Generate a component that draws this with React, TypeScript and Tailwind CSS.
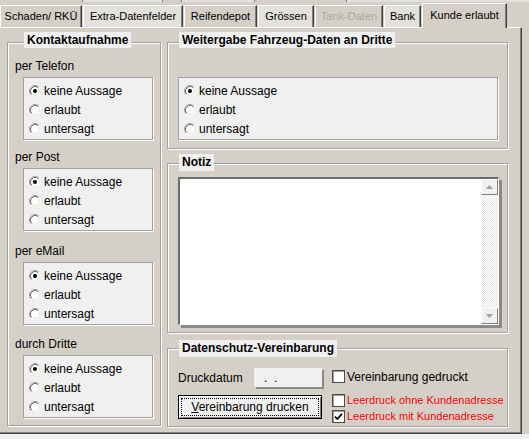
const FONT = "font-['Liberation_Sans',Arial,sans-serif]";

function RadioIcon({ checked }: { checked?: boolean }) {
  return (
    <svg width="12" height="12" viewBox="0 0 12 12" className="shrink-0">
      <circle cx="6" cy="6" r="5.5" fill="#fff" />
      <path d="M2.11 9.89A5.5 5.5 0 0 1 9.89 2.11" stroke="#a0a0a0" fill="none" />
      <path d="M2.82 9.18A4.5 4.5 0 0 1 9.18 2.82" stroke="#6a6a6a" fill="none" />
      <path d="M9.18 2.82A4.5 4.5 0 0 1 2.82 9.18" stroke="#e4e2dd" fill="none" />
      {checked && <circle cx="6" cy="6" r="2" fill="#000" />}
    </svg>
  );
}

function CheckBox({ checked }: { checked?: boolean }) {
  return (
    <div className="w-[13px] h-[13px] shrink-0 bg-white border border-[#4a4a4a] shadow-[inset_1px_1px_0_#a0a0a0] flex items-center justify-center">
      {checked && (
        <svg width="9" height="9" viewBox="0 0 9 9">
          <path d="M1 4.5 L3.3 7 L8 1.8" stroke="#000" strokeWidth="1.8" fill="none" />
        </svg>
      )}
    </div>
  );
}

function RadioBox({ className }: { className: string }) {
  const opts = ['keine Aussage', 'erlaubt', 'untersagt'];
  return (
    <div
      className={`h-[63px] bg-[#f0f0f0] border border-[#a0a0a0] shadow-[1px_1px_0_#fff] pt-[3px] pl-[5px] ${className}`}
    >
      {opts.map((o, i) => (
        <div key={o} className="flex items-center gap-[3px] h-[19px] text-[12px] text-black">
          <RadioIcon checked={i === 0} />
          <span>{o}</span>
        </div>
      ))}
    </div>
  );
}

function Legend({ text, className }: { text: string; className: string }) {
  return (
    <div className={`w-fit bg-[#f0f0f0] px-[3px] text-[12px] font-bold text-black ${className}`}>{text}</div>
  );
}

const groupCls = 'border border-[#a0a0a0] shadow-[inset_1px_1px_0_#fff,1px_1px_0_#fff] flex flex-col';

const tabs = [
  { label: 'Schaden/ RKÜ', cls: 'w-[82px] bg-[#d4d0c8] text-black' },
  { label: 'Extra-Datenfelder', cls: 'w-[100px] bg-[#e3e1dc] text-black' },
  { label: 'Reifendepot', cls: 'w-[73px] bg-[#d4d0c8] text-black' },
  { label: 'Grössen', cls: 'w-[56px] bg-[#e3e1dc] text-black' },
  { label: 'Tank-Daten', cls: 'w-[68px] bg-[#d4d0c8] text-[#aca899]' },
  { label: 'Bank', cls: 'w-[37px] bg-[#e3e1dc] text-black' },
];

export default function App() {
  return (
    <div className={`w-[529px] h-[439px] bg-[#d4d0c8] flex flex-col overflow-hidden ${FONT}`}>
      {/* Tab header */}
      <div className="h-[27px] flex flex-col">
        <div className="h-[2px] flex">
          <div className="w-[83px] border-r border-r-[#808080]" />
          <div className="w-[80px] bg-[#e3e1dc] border-r border-r-[#808080]" />
          <div className="w-[19px] border-r border-r-[#808080]" />
          <div className="w-[73px] bg-[#e3e1dc] border-r border-r-[#808080]" />
          <div className="w-[92px] border-r border-r-[#808080]" />
          <div className="flex-1 bg-[#e3e1dc]" />
        </div>
        <div className="h-[25px] flex items-end gap-[1px]">
          {tabs.map((t) => (
            <div
              key={t.label}
              className={`h-[22px] flex items-center justify-center text-[11px] border-t border-l border-r border-t-white border-l-white border-r-[#404040] shadow-[inset_-1px_0_0_#808080] ${t.cls}`}
            >
              {t.label}
            </div>
          ))}
          <div className="relative z-10 -mb-[1px] w-[85px] h-[25px] bg-[#d4d0c8] flex items-start justify-center pt-[3px] text-[11px] text-black border-t border-l border-r border-t-white border-l-white border-r-[#404040] shadow-[inset_-1px_0_0_#808080]">
            Kunde erlaubt
          </div>
        </div>
      </div>

      {/* Page */}
      <div className="flex h-[407px]">
        <div className="w-[522px] h-[407px] border-t border-r border-b border-t-white border-r-[#404040] border-b-[#404040] shadow-[inset_-1px_-1px_0_#808080] flex pt-[14px] pl-[7px]">
          {/* Kontaktaufnahme */}
          <div className={`w-[154px] h-[384px] ${groupCls}`}>
            <Legend text="Kontaktaufnahme" className="-mt-[11px] ml-[16px] h-[16px] leading-[16px]" />
            <div className="mt-[11px] pl-[7px] h-[15px] leading-[15px] text-[12px] text-black">per Telefon</div>
            <RadioBox className="mt-[3px] ml-[15px] w-[130px]" />
            <div className="mt-[10px] pl-[7px] h-[15px] leading-[15px] text-[12px] text-black">per Post</div>
            <RadioBox className="mt-[3px] ml-[15px] w-[130px]" />
            <div className="mt-[13px] pl-[7px] h-[15px] leading-[15px] text-[12px] text-black">per eMail</div>
            <RadioBox className="mt-[3px] ml-[15px] w-[130px]" />
            <div className="mt-[12px] pl-[7px] h-[15px] leading-[15px] text-[12px] text-black">durch Dritte</div>
            <RadioBox className="mt-[3px] ml-[15px] w-[130px]" />
          </div>

          {/* Right column */}
          <div className="ml-[6px] flex flex-col">
            <div className={`w-[341px] h-[107px] ${groupCls}`}>
              <Legend text="Weitergabe Fahrzeug-Daten an Dritte" className="-mt-[11px] ml-[11px] h-[16px] leading-[16px]" />
              <RadioBox className="mt-[29px] ml-[10px] w-[320px]" />
            </div>

            <div className={`mt-[14px] w-[341px] h-[170px] ${groupCls}`}>
              <Legend text="Notiz" className="-mt-[10px] ml-[11px] h-[17px] leading-[17px]" />
              <div className="mt-[6px] ml-[10px] w-[321px] h-[148px] bg-white border-t-2 border-l-2 border-r border-b border-t-[#6d6d6d] border-l-[#6d6d6d] border-r-white border-b-white shadow-[3px_3px_0_#8a8a8a] flex justify-end">
                <div className="w-[17px] h-full flex flex-col bg-[repeating-conic-gradient(#ffffff_0_25%,#e8e8e8_0_50%)] bg-[length:2px_2px]">
                  <div className="h-[16px] bg-[#f0f0f0] border-t border-l border-t-white border-l-white border-r border-b border-r-[#808080] border-b-[#808080] flex items-center justify-center">
                    <svg width="7" height="4" viewBox="0 0 7 4">
                      <path d="M0 4 L3.5 0 L7 4 Z" fill="#a0a0a0" />
                    </svg>
                  </div>
                  <div className="flex-1" />
                  <div className="h-[16px] bg-[#f0f0f0] border-t border-l border-t-white border-l-white border-r border-b border-r-[#808080] border-b-[#808080] flex items-center justify-center">
                    <svg width="7" height="4" viewBox="0 0 7 4">
                      <path d="M0 0 L3.5 4 L7 0 Z" fill="#a0a0a0" />
                    </svg>
                  </div>
                </div>
              </div>
            </div>

            <div className={`mt-[15px] w-[341px] h-[79px] ${groupCls}`}>
              <Legend text="Datenschutz-Vereinbarung" className="-mt-[9px] ml-[11px] h-[17px] leading-[17px]" />
              <div className="mt-[11px] ml-[10px] flex">
                <div className="w-[154px] flex flex-col">
                  <div className="h-[19px] flex items-center">
                    <span className="w-[76px] text-[12px] text-black">Druckdatum</span>
                    <div className="w-[68px] h-[19px] bg-[#f0f0f0] shadow-[2px_2px_0_#8a8a8a] pl-[10px] flex items-center text-[12px] text-black whitespace-pre">
                      .  .
                    </div>
                  </div>
                  <div className="mt-[8px] w-[144px] h-[24px] border border-black bg-[#f0f0f0] shadow-[inset_1px_1px_0_#fff,inset_-1px_-1px_0_#808080] p-[2px]">
                    <div className="h-full border border-dotted border-black flex items-center justify-center text-[12px] text-black">
                      <span>
                        <span className="underline">V</span>ereinbarung drucken
                      </span>
                    </div>
                  </div>
                </div>
                <div className="flex flex-col pt-[2px]">
                  <div className="h-[13px] flex items-center gap-[2px]">
                    <CheckBox />
                    <span className="text-[12px] text-black">Vereinbarung gedruckt</span>
                  </div>
                  <div className="mt-[11px] h-[13px] flex items-center gap-[2px]">
                    <CheckBox />
                    <span className="text-[11px] text-[#ff0000]">Leerdruck ohne Kundenadresse</span>
                  </div>
                  <div className="mt-[3px] h-[13px] flex items-center gap-[2px]">
                    <CheckBox checked />
                    <span className="text-[11px] text-[#ff0000]">Leerdruck mit Kundenadresse</span>
                  </div>
                </div>
              </div>
            </div>
          </div>
        </div>
        <div className="flex-1" />
      </div>
      <div className="h-[5px] bg-[#f0f0f0]" />
    </div>
  );
}
